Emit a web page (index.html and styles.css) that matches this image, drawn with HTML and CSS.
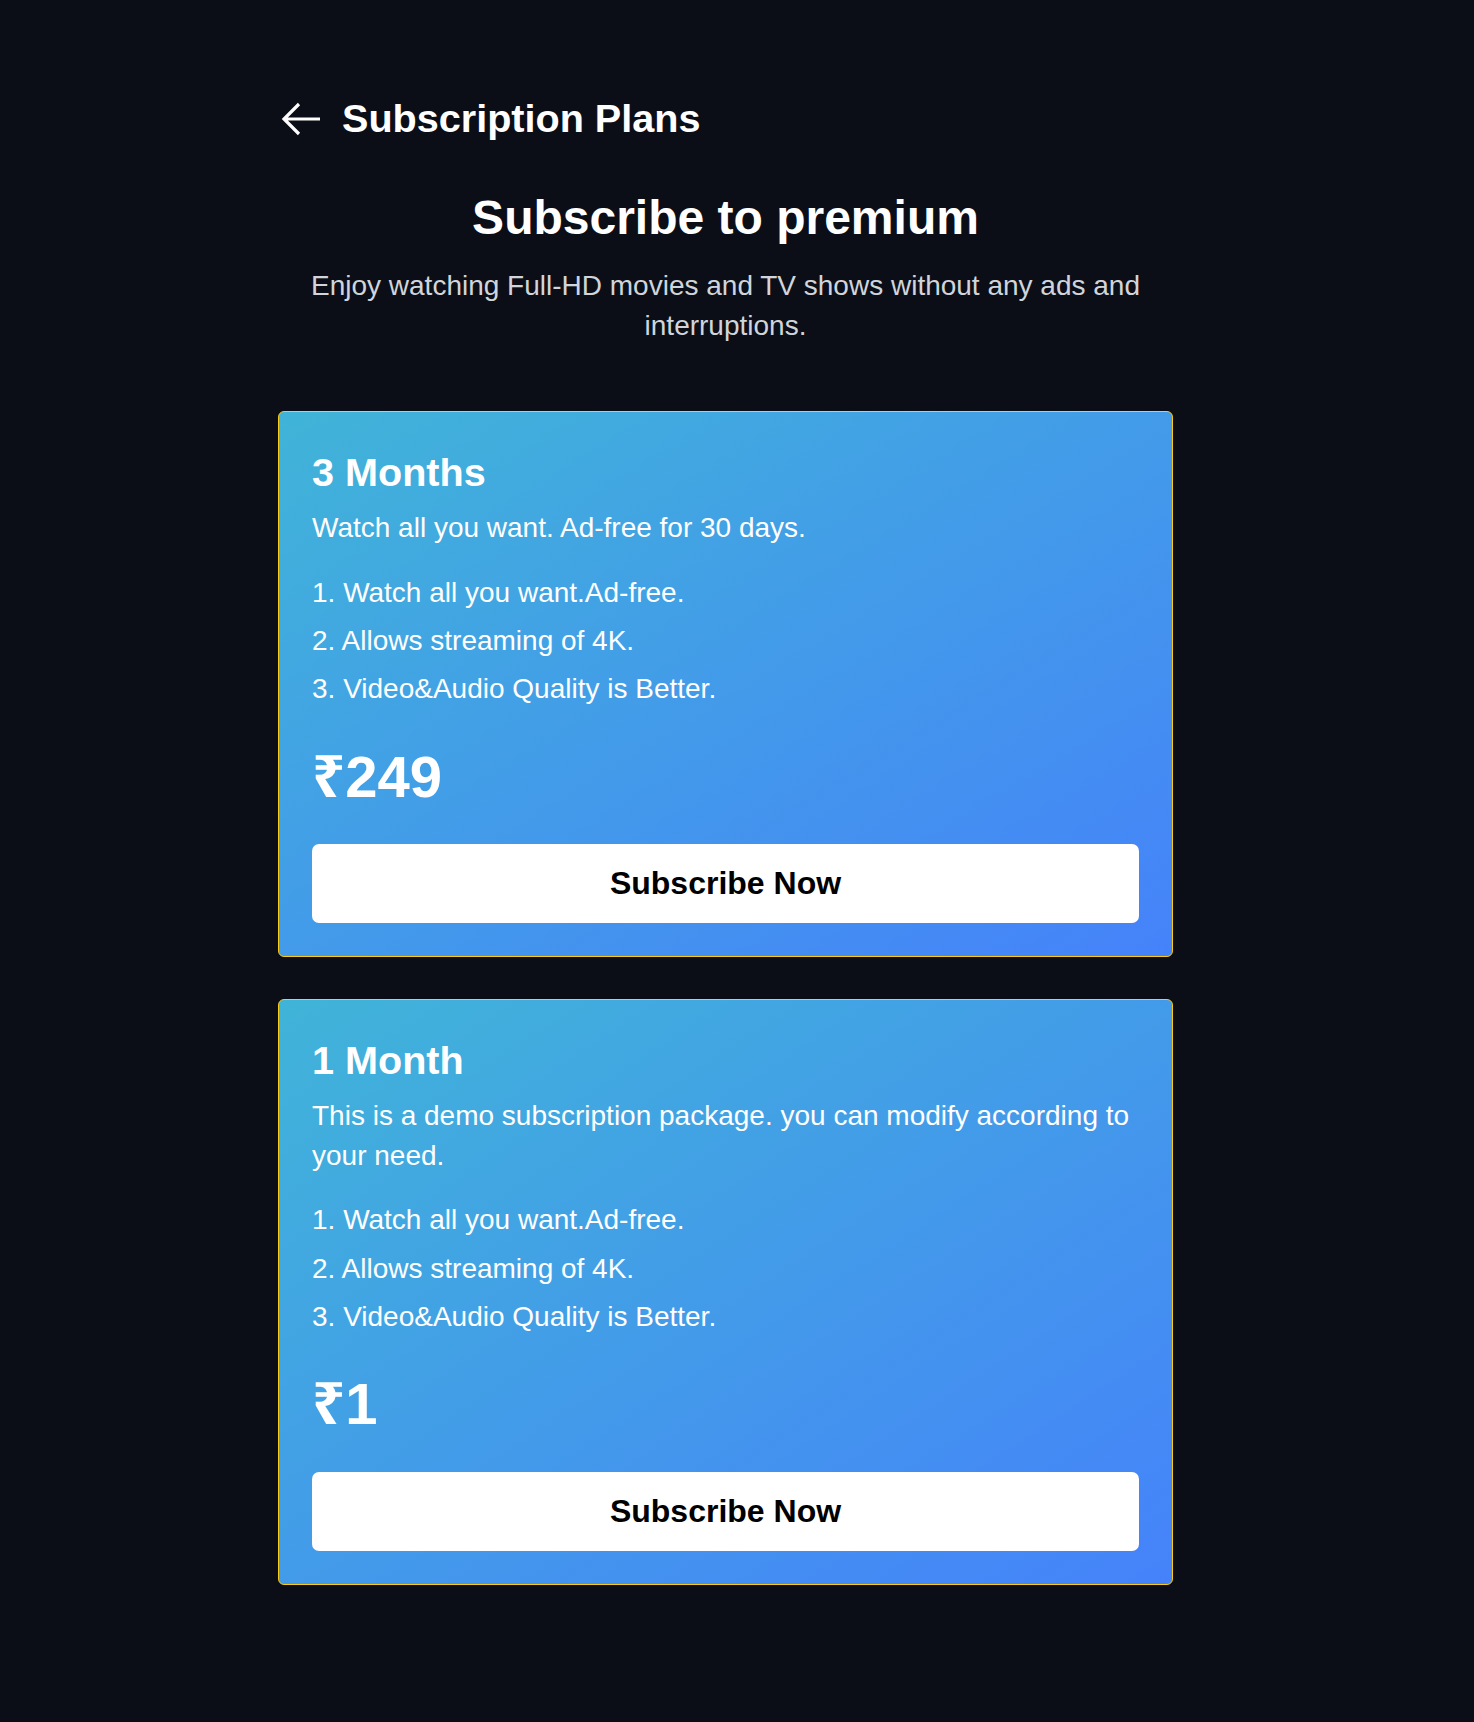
FILE: index.html
```html
<!DOCTYPE html>
<html lang="en">
<head>
<meta charset="utf-8">
<title>Subscription Plans</title>
<link rel="stylesheet" href="styles.css">
</head>
<body>
<main class="page">
  <header class="topbar">
    <svg class="back-icon" width="44" height="34" viewBox="0 0 44 34" aria-hidden="true">
      <path d="M6 17H42M21 2L6 17L21 32" fill="none" stroke="#ffffff" stroke-width="3.2"/>
    </svg>
    <h1 class="topbar-title">Subscription Plans</h1>
  </header>

  <section class="intro">
    <h2 class="intro-title">Subscribe to premium</h2>
    <p class="intro-text">Enjoy watching Full-HD movies and TV shows without any ads and interruptions.</p>
  </section>

  <section class="plans">
    <article class="plan">
      <h3 class="plan-name">3 Months</h3>
      <p class="plan-desc">Watch all you want. Ad-free for 30 days.</p>
      <ul class="plan-features">
        <li>1. Watch all you want.Ad-free.</li>
        <li>2. Allows streaming of 4K.</li>
        <li>3. Video&amp;Audio Quality is Better.</li>
      </ul>
      <div class="plan-price">₹249</div>
      <button class="plan-btn" type="button">Subscribe Now</button>
    </article>

    <article class="plan">
      <h3 class="plan-name">1 Month</h3>
      <p class="plan-desc">This is a demo subscription package. you can modify according to your need.</p>
      <ul class="plan-features">
        <li>1. Watch all you want.Ad-free.</li>
        <li>2. Allows streaming of 4K.</li>
        <li>3. Video&amp;Audio Quality is Better.</li>
      </ul>
      <div class="plan-price">₹1</div>
      <button class="plan-btn" type="button">Subscribe Now</button>
    </article>
  </section>
</main>
</body>
</html>
```
FILE: styles.css
```css
* {
  box-sizing: border-box;
}

html, body {
  margin: 0;
  background: #0b0e17;
}

body {
  font-family: "Liberation Sans", Arial, "DejaVu Sans", sans-serif;
  color: #ffffff;
  padding: 95px 23px 136px 0;
}

.page {
  width: 895px;
  margin: 0 auto;
}

.topbar {
  display: flex;
  align-items: center;
  gap: 20px;
}

.back-icon {
  display: block;
  flex: none;
}

.topbar-title {
  margin: 0;
  font-size: 39.6px;
  line-height: 47.5px;
  font-weight: 700;
}

.intro {
  text-align: center;
  margin-top: 46px;
}

.intro-title {
  margin: 0;
  font-size: 48px;
  line-height: 57.6px;
  font-weight: 700;
}

.intro-text {
  margin: 20px 0 0;
  font-size: 28px;
  line-height: 39.5px;
  color: #d1d5db;
}

.plans {
  margin-top: 66px;
  display: flex;
  flex-direction: column;
  gap: 42px;
}

.plan {
  border: 1px solid #facc15;
  border-radius: 6px;
  padding: 33px;
  background: linear-gradient(to bottom right, #40b4d8, #4582fa);
  display: flex;
  flex-direction: column;
}

.plan-name {
  margin: 0;
  font-size: 39.6px;
  line-height: 54px;
  font-weight: 700;
}

.plan-desc {
  margin: 9px 0 0;
  font-size: 28px;
  line-height: 39.5px;
}

.plan-features {
  list-style: none;
  margin: 25px 0 0;
  padding: 0;
  display: flex;
  flex-direction: column;
  gap: 8.8px;
  font-size: 28px;
  line-height: 39.5px;
}

.plan-price {
  margin-top: 33px;
  font-family: "Liberation Sans", "Noto Sans", Arial, sans-serif;
  font-size: 58px;
  line-height: 69.6px;
  font-weight: 700;
}

.plan-btn {
  margin-top: 33px;
  height: 79px;
  width: 100%;
  border: none;
  border-radius: 7px;
  background: #ffffff;
  color: #000000;
  font-family: "Liberation Sans", Arial, sans-serif;
  font-size: 32px;
  font-weight: 700;
  cursor: pointer;
}
```
